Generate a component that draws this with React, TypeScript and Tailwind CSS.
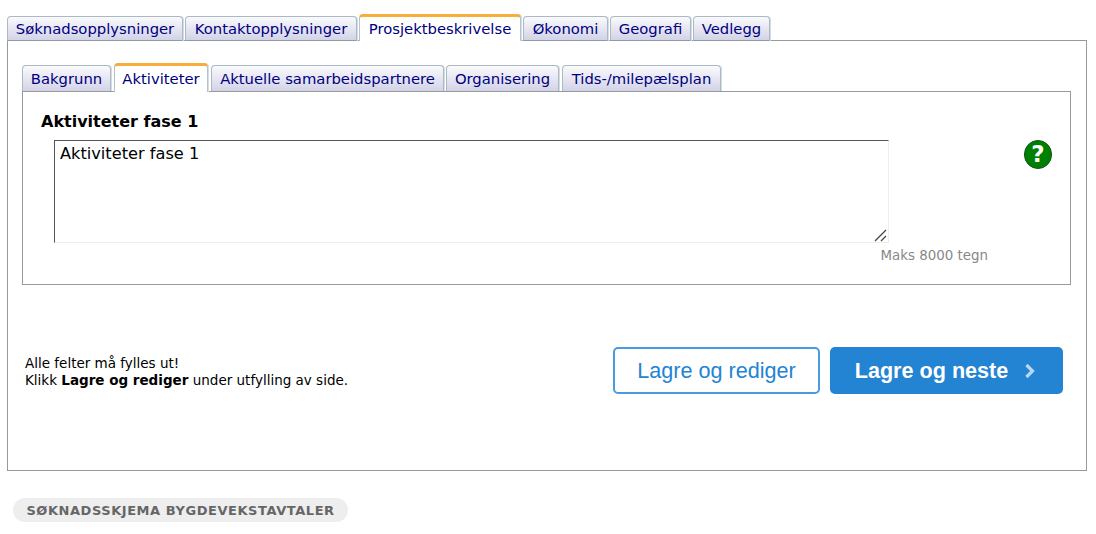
const mainTabs = [
  { label: 'Søknadsopplysninger', width: 'w-[176px]' },
  { label: 'Kontaktopplysninger', width: 'w-[172px]' },
  { label: 'Prosjektbeskrivelse', width: 'w-[162px]', active: true },
  { label: 'Økonomi', width: 'w-[85px]' },
  { label: 'Geografi', width: 'w-[81px]' },
  { label: 'Vedlegg', width: 'w-[77px]' },
];

const subTabs = [
  { label: 'Bakgrunn', width: 'w-[89px]' },
  { label: 'Aktiviteter', width: 'w-[94px]', active: true },
  { label: 'Aktuelle samarbeidspartnere', width: 'w-[233px]' },
  { label: 'Organisering', width: 'w-[113px]' },
  { label: 'Tids-/milepælsplan', width: 'w-[159px]' },
];

function Tab({ label, width, active, tall }: { label: string; width: string; active?: boolean; tall?: boolean }) {
  if (active) {
    return (
      <div className={`${width} ${tall ? 'h-[29px]' : 'h-[27px]'} relative flex items-center justify-center rounded-t-[4px] border-x border-t-[3px] border-x-[#b4c4cc] border-t-[#f6ad3c] bg-white text-[#000080] shadow-[1px_0_0_#d5dde2]`}>
        {label}
      </div>
    );
  }
  return (
    <div className={`${width} ${tall ? 'h-[27px]' : 'h-[25px]'} flex items-center justify-center rounded-t-[4px] border border-[#a9bac4] border-b-[#8f9ba3] bg-gradient-to-b from-[#fafafd] to-[#d3d3e8] pt-[1px] text-[#000080] shadow-[1px_0_0_#d5dde2]`}>
      {label}
    </div>
  );
}

export default function App() {
  return (
    <div className="h-[534px] w-[1096px] overflow-hidden bg-white pt-[14px] pl-[7px] font-['DejaVu_Sans',Verdana,sans-serif] text-[14.8px] leading-none text-black">
      <div className="-mb-px flex h-[27px] items-end gap-[2px]">
        {mainTabs.map(t => <Tab key={t.label} {...t} />)}
      </div>
      <div className="flex h-[431px] w-[1080px] flex-col border border-[#999] px-[14px] pt-[22px]">
        <div className="-mb-px flex h-[29px] items-end gap-[3px] [&>*:nth-child(4)]:-ml-px">
          {subTabs.map(t => <Tab key={t.label} {...t} tall />)}
        </div>
        <div className="h-[194px] w-[1049px] border border-[#999] pt-[21px] pl-[18px]">
          <h2 className="text-[16px] leading-[18px] font-bold">Aktiviteter fase 1</h2>
          <div className="mt-[9px] flex items-start pl-[13px]">
            <div className="relative h-[103px] w-[835px]">
              <textarea
                defaultValue="Aktiviteter fase 1"
                className="block h-full w-full resize-none border border-t-[#555] border-r-[#eee] border-b-[#eee] border-l-[#555] px-[5px] py-[3px] text-[16.2px] leading-[19px] outline-none"
              />
              <svg className="absolute right-[2px] bottom-[1px]" width="13" height="13" viewBox="0 0 13 13" stroke="#444" strokeWidth="1.3">
                <path d="M1 12L12 1M7 12l5-5" />
              </svg>
            </div>
            <div className="ml-[135px] flex h-[29px] w-[28px] items-center justify-center rounded-full border border-[#14531f] bg-[#008000] text-[23px] font-bold text-white">?</div>
          </div>
          <div className="mt-[5px] w-[947px] text-right text-[13.4px] leading-[16px] text-[#888]">Maks 8000 tegn</div>
        </div>
        <div className="mt-[62px] flex items-center justify-between pr-[9px] pl-[3px]">
          <p className="pt-[2px] text-[13.5px] leading-[17px]">
            Alle felter må fylles ut!<br />
            Klikk <b>Lagre og rediger</b> under utfylling av side.
          </p>
          <div className="flex gap-[10px] font-['Liberation_Sans',Arial,sans-serif] text-[21.6px]">
            <button className="h-[47px] w-[207px] rounded-[5px] border-2 border-[#4b9ade] bg-white text-[#2284d2]">Lagre og rediger</button>
            <button className="flex h-[47px] w-[233px] items-center justify-center gap-[16px] rounded-[5px] bg-[#2284d2] pr-[2px] font-bold text-white">
              Lagre og neste
              <svg width="12" height="16" viewBox="0 0 12 16" fill="none" stroke="#b9d8f0" strokeWidth="3.2"><path d="M2.5 2l6 6-6 6" /></svg>
            </button>
          </div>
        </div>
      </div>
      <div className="mt-[27px] ml-[6px] flex h-[24px] w-[335px] items-center justify-center rounded-full bg-[#eee] text-[13px] font-bold tracking-[0.55px] text-[#666]">
        SØKNADSSKJEMA BYGDEVEKSTAVTALER
      </div>
    </div>
  );
}
